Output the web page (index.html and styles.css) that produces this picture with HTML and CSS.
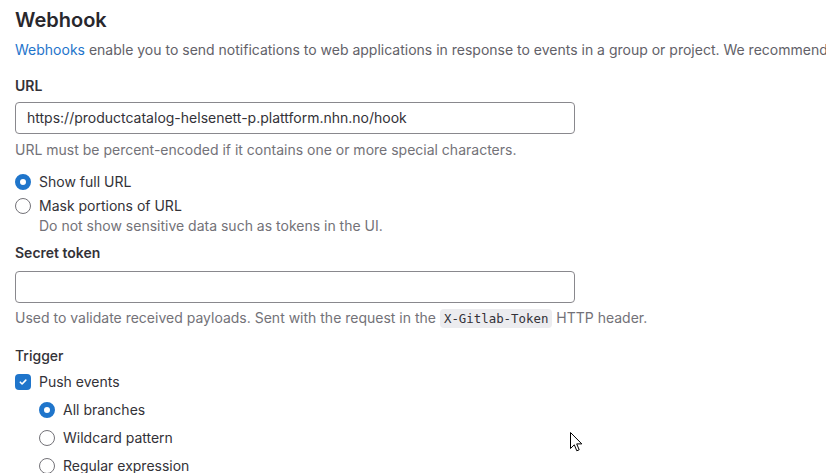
FILE: index.html
```html
<!DOCTYPE html>
<html>
<head>
<meta charset="utf-8">
<link rel="stylesheet" href="styles.css">
</head>
<body>
<div class="page">
  <h2 class="title">Webhook</h2>
  <p class="desc"><a class="link" href="#">Webhooks</a> enable you to send notifications to web applications in response to events in a group or project. We recommend using an integration in preference to a webhook.</p>

  <div class="field field-url">
    <label class="label">URL</label>
    <div class="input">https://productcatalog-helsenett-p.plattform.nhn.no/hook</div>
    <p class="help">URL must be percent-encoded if it contains one or more special characters.</p>
  </div>

  <div class="choices">
    <div class="choice">
      <span class="radio checked"></span>
      <span class="choice-text">Show full URL</span>
    </div>
    <div class="choice">
      <span class="radio"></span>
      <span class="choice-text">Mask portions of URL</span>
    </div>
    <p class="help sub">Do not show sensitive data such as tokens in the UI.</p>
  </div>

  <div class="field field-secret">
    <label class="label">Secret token</label>
    <div class="input"></div>
    <p class="help">Used to validate received payloads. Sent with the request in the <code class="code">X-Gitlab-Token</code> HTTP header.</p>
  </div>

  <div class="trigger">
    <div class="label legend">Trigger</div>
    <div class="choice check-row">
      <span class="checkbox"><svg width="10" height="10" viewBox="0 0 10 10"><path d="M2.3 5.2 L4.1 7 L7.8 3.1" fill="none" stroke="#fff" stroke-width="1.6" stroke-linecap="round" stroke-linejoin="round"/></svg></span>
      <span class="choice-text">Push events</span>
    </div>
    <div class="branches">
      <div class="choice">
        <span class="radio checked"></span>
        <span class="choice-text">All branches</span>
      </div>
      <div class="choice">
        <span class="radio"></span>
        <span class="choice-text">Wildcard pattern</span>
      </div>
      <div class="choice">
        <span class="radio"></span>
        <span class="choice-text">Regular expression</span>
      </div>
    </div>
  </div>
</div>
<svg class="cursor" width="14" height="22" viewBox="0 0 14 22"><path d="M0.5 0.5 L0.5 16.5 L4.3 12.8 L6.8 18.8 L9.2 17.8 L6.7 11.9 L11.8 11.9 Z" fill="#fff" stroke="#000" stroke-width="1" stroke-linejoin="miter"/></svg>
</body>
</html>
```

FILE: styles.css
```css
html, body {
  margin: 0;
  padding: 0;
  background: #ffffff;
  overflow: hidden;
}
body {
  width: 826px;
  height: 473px;
  position: relative;
  font-family: Inter, "Noto Sans", sans-serif;
  font-size: 14px;
  line-height: 20px;
  color: #333238;
}
.page {
  padding: 8px 0 0 15px;
  white-space: nowrap;
}
.title {
  margin: 0;
  font-size: 20px;
  line-height: 24px;
  font-weight: 600;
  color: #28272d;
}
.desc {
  margin: 8px 0 0;
  color: #626168;
}
.link {
  color: #1f75cb;
  text-decoration: none;
}
.label {
  display: block;
  font-weight: 600;
  color: #333238;
}
.legend {
  font-weight: 500;
}
.field-url {
  margin-top: 16px;
}
.input {
  box-sizing: border-box;
  width: 560px;
  height: 32px;
  margin-top: 6px;
  border: 1px solid #89888d;
  border-radius: 4px;
  padding: 5px 11px;
  line-height: 20px;
  color: #333238;
}
.help {
  margin: 6px 0 0;
  color: #737278;
}
.help.sub {
  margin: 0 0 0 24px;
}
.choices {
  margin-top: 12px;
  display: flex;
  flex-direction: column;
  gap: 4px;
}
.choices .help.sub {
  margin-top: -4px;
}
.choice {
  display: flex;
  align-items: center;
  gap: 8px;
  height: 20px;
}
.radio {
  box-sizing: border-box;
  width: 16px;
  height: 16px;
  border: 1px solid #737278;
  border-radius: 50%;
  background: #fff;
  flex: none;
}
.radio.checked {
  border: 5px solid #1f75cb;
  background: #fff;
}
.field-secret {
  margin-top: 7px;
}
.field-secret .input {
  margin-top: 8px;
}
.field-secret .help {
  margin-top: 5px;
}
.code {
  font-family: "DejaVu Sans Mono", "Liberation Mono", monospace;
  font-size: 12.4px;
  background: #ececef;
  border-radius: 4px;
  padding: 2px 4px;
  color: #333238;
}
.trigger {
  margin-top: 17px;
}
.check-row {
  margin-top: 6px;
}
.checkbox {
  box-sizing: border-box;
  width: 16px;
  height: 16px;
  border-radius: 4px;
  background: #1f75cb;
  display: flex;
  align-items: center;
  justify-content: center;
  flex: none;
}
.branches {
  margin-top: 8px;
  padding-left: 24px;
  display: flex;
  flex-direction: column;
  gap: 8px;
}
.cursor {
  position: absolute;
  left: 570px;
  top: 432px;
}
```
